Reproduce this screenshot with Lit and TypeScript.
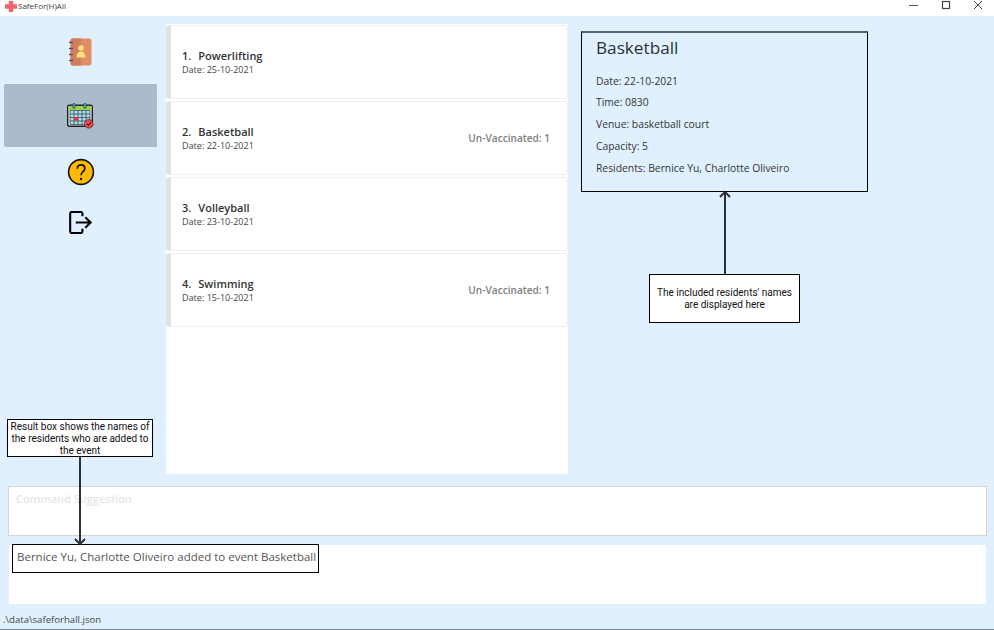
import { LitElement, css, html, svg } from 'lit';
import { customElement } from 'lit/decorators.js';

const events = [
  { name: 'Powerlifting', date: '25-10-2021', unvaccinated: 0 },
  { name: 'Basketball', date: '22-10-2021', unvaccinated: 1 },
  { name: 'Volleyball', date: '23-10-2021', unvaccinated: 0 },
  { name: 'Swimming', date: '15-10-2021', unvaccinated: 1 },
];

const contactsIcon = html`<svg width="24" height="28" viewBox="0 0 24 28">
  <rect x="1.500" y="0.500" width="21" height="27" rx="2" fill="#e08e64" />
  <path d="M1.500 2.500a2 2 0 0 1 2-2H12v27H3.500a2 2 0 0 1-2-2z" fill="#cf7f5e" />
  <circle cx="12" cy="10" r="2.800" fill="#fbe07e" />
  <path d="M7.500 19.500c0-4 1.800-6 4.500-6s4.500 2 4.500 6z" fill="#fbe07e" />
  ${[4.500, 10.500, 16.500, 22.500].map((y) => svg`<path d="M0 ${y}h4" stroke="#5b3f78" stroke-width="1.300" />`)}
</svg>`;

const gridX = [3, 7, 11, 15, 19, 23];
const gridY = [7.500, 11, 14.500, 18, 21.500];

const calendarIcon = html`<svg width="28" height="26" viewBox="0 0 28 26">
  <rect x="0.700" y="2.200" width="24.600" height="21" rx="1.500" fill="#f2f2f2" stroke="#1c1c1c" stroke-width="1.400" />
  <path d="M1.400 2.900h23.200v4.100H1.400z" fill="#9ad14b" />
  <path d="M3 7.500h20v14H3z" fill="#a9dcec" />
  ${gridX.map((x) => svg`<path d="M${x} 7.500v14" stroke="#2c3a44" stroke-width="0.700" />`)}
  ${gridY.map((y) => svg`<path d="M3 ${y}h20" stroke="#2c3a44" stroke-width="0.700" />`)}
  <rect x="7" y="14" width="4" height="3.500" fill="#e8303c" />
  <rect x="5.800" y="0.300" width="2.400" height="5" rx="1" fill="#4fa3c4" stroke="#1c3440" stroke-width="0.600" />
  <rect x="16.800" y="0.300" width="2.400" height="5" rx="1" fill="#4fa3c4" stroke="#1c3440" stroke-width="0.600" />
  <circle cx="21.800" cy="20.800" r="4.300" fill="#ee4b4f" stroke="#3c2226" stroke-width="0.700" />
  <path d="M19.800 20.800l1.600 1.500 2.500-2.600" fill="none" stroke="#401418" stroke-width="1.100" />
</svg>`;

const helpIcon = html`<svg width="28" height="28" viewBox="0 0 28 28">
  <circle cx="14" cy="14" r="12.400" fill="#ffb900" stroke="#111" stroke-width="1.600" />
  <path d="M10.300 10.800c0-2.500 1.700-3.900 3.800-3.900s3.700 1.400 3.700 3.500c0 3.100-3.800 3.300-3.800 6.900" fill="none" stroke="#111" stroke-width="1.700" />
  <circle cx="14" cy="21" r="1.200" fill="#111" />
</svg>`;

const exitIcon = html`<svg width="24" height="23" viewBox="0 0 25 24">
  <path d="M14 5.500V2.800a1.800 1.800 0 0 0-1.800-1.800H3a1.800 1.800 0 0 0-1.800 1.800v18.400A1.800 1.800 0 0 0 3 23h9.200a1.800 1.800 0 0 0 1.800-1.800v-2.700" fill="none" stroke="#000" stroke-width="2.200" />
  <path d="M7 12h15M17 6.500l5.500 5.500-5.500 5.500" fill="none" stroke="#000" stroke-width="2.200" />
</svg>`;

@customElement('app-root')
export class AppRoot extends LitElement {
  render() {
    return html`
      <div class="window">
        <div class="titlebar">
          <div class="title">
            <svg class="cross" width="12" height="11" viewBox="0 0 12 11">
              <path d="M3.800 0h4.400v3.300H12v4.400H8.200V11H3.800V7.700H0V3.300h3.800z" fill="#f0626a" />
            </svg>
            SafeFor(H)All
          </div>
          <div class="controls">
            <svg width="10" height="10" viewBox="0 0 10 10"><path d="M0 5.500h9" stroke="#555" /></svg>
            <svg width="10" height="10" viewBox="0 0 10 10"><rect x="1.500" y="1.500" width="7" height="7" fill="none" stroke="#444" stroke-width="1.200" /></svg>
            <svg width="10" height="10" viewBox="0 0 10 10"><path d="M1 1l8 8M9 1l-8 8" stroke="#444" /></svg>
          </div>
        </div>

        <div class="main">
          <nav class="sidebar">
            <div class="nav-item">${contactsIcon}</div>
            <div class="nav-item selected">${calendarIcon}</div>
            <div class="nav-item small">${helpIcon}</div>
            <div class="nav-item small">${exitIcon}</div>
          </nav>

          <section class="list">
            ${events.map(
              (e, i) => html`
                <div class="card">
                  <div class="card-text">
                    <div class="card-name"><span class="index">${i + 1}.</span>${e.name}</div>
                    <div class="card-date">Date: ${e.date}</div>
                  </div>
                  ${e.unvaccinated ? html`<div class="tag">Un-Vaccinated: ${e.unvaccinated}</div>` : ''}
                </div>
              `,
            )}
          </section>

          <section class="detail">
            <h1>Basketball</h1>
            <p>Date: 22-10-2021</p>
            <p>Time: 0830</p>
            <p>Venue: basketball court</p>
            <p>Capacity: 5</p>
            <p>Residents: Bernice Yu, Charlotte Oliveiro</p>
          </section>
        </div>

        <div class="command">Command Suggestion</div>
        <div class="result"></div>
        <div class="status">.\\data\\safeforhall.json</div>

        <div class="note note-result">Result box shows the names of the residents who are added to the event</div>
        <div class="note note-detail">The included residents' names are displayed here</div>
        <div class="result-highlight">Bernice Yu, Charlotte Oliveiro added to event Basketball</div>

        <svg class="arrows" width="994" height="630" viewBox="0 0 994 630">
          <path d="M80 457v87M75 539l5 5 5-5" fill="none" stroke="#2f3035" stroke-width="2" />
          <path d="M725 274V192M720 197l5-5 5 5" fill="none" stroke="#2f3035" stroke-width="2" />
        </svg>
      </div>
    `;
  }

  static styles = css`
    :host {
      display: block;
      font-family: 'Open Sans', sans-serif;
    }

    .window {
      position: relative;
      width: 994px;
      height: 630px;
      background: #e1f0ff;
      display: flex;
      flex-direction: column;
      overflow: hidden;
      box-sizing: border-box;
      border-bottom: 1px solid #7d8790;
    }

    .titlebar {
      height: 16px;
      flex: none;
      background: #fff;
      display: flex;
      justify-content: space-between;
      align-items: flex-start;
    }

    .title {
      display: flex;
      align-items: center;
      gap: 1px;
      padding-left: 5px;
      font-size: 8px;
      line-height: 12px;
      color: #3a3a3a;
    }

    .controls {
      display: flex;
      gap: 22px;
      padding-right: 11px;
    }

    .main {
      flex: none;
      height: 458px;
      display: flex;
    }

    .sidebar {
      width: 166px;
      flex: none;
      box-sizing: border-box;
      padding: 17px 9px 0 4px;
      display: flex;
      flex-direction: column;
    }

    .nav-item {
      height: 37px;
      display: flex;
      align-items: center;
      justify-content: center;
    }

    .nav-item.selected {
      height: 63px;
      margin: 14px 0 6px;
      background: #abbbcc;
      border-radius: 2px 0 0 2px;
    }

    .nav-item.small {
      height: 38px;
      margin-bottom: 12px;
    }

    .list {
      width: 402px;
      flex: none;
      margin-top: 8px;
      background: #fff;
      display: flex;
      flex-direction: column;
      gap: 2px;
      padding-top: 1px;
      box-sizing: border-box;
    }

    .card {
      height: 74px;
      flex: none;
      box-sizing: border-box;
      border: 1px solid #f0f0f0;
      border-left: 5px solid #e2e2e2;
      border-radius: 3px;
      padding: 0 17px 0 11px;
      display: flex;
      align-items: center;
      justify-content: space-between;
    }

    .card-name {
      font-size: 11px;
      font-weight: 600;
      line-height: 15px;
      color: #333;
    }

    .index {
      margin-right: 7px;
    }

    .card-date {
      margin-top: 1px;
      font-size: 9.050px;
      line-height: 12px;
      color: #444;
    }

    .tag {
      font-size: 10.100px;
      font-weight: 600;
      color: #808080;
    }

    .detail {
      width: 287px;
      height: 161px;
      margin: 15px 0 0 13px;
      box-sizing: border-box;
      border: 1px solid #000;
      border-top: 2px solid #5c6068;
      padding: 2px 14px 0;
      color: #333;
    }

    h1 {
      margin: 0 0 10.600px;
      font-size: 17.200px;
      font-weight: 400;
      line-height: 25px;
      color: #2b3036;
    }

    p {
      margin: 0;
      font-size: 10.340px;
      line-height: 21.750px;
    }

    .command {
      flex: none;
      height: 50px;
      margin: 12px 7px 0 8px;
      box-sizing: border-box;
      background: #fff;
      border: 1px solid #d6d6d6;
      padding: 4px 7px;
      font-size: 11px;
      font-weight: 600;
      line-height: 15px;
      color: #e6e6e6;
    }

    .result {
      flex: none;
      height: 59px;
      margin: 9px 8px 0 9px;
      background: #fff;
    }

    .status {
      flex: 1;
      padding-left: 3px;
      font-size: 9.600px;
      line-height: 31px;
      color: #444;
    }

    .note {
      position: absolute;
      box-sizing: border-box;
      background: #fff;
      border: 1px solid #000;
      font-family: Roboto, sans-serif;
      font-size: 10px;
      line-height: 12px;
      text-align: center;
      color: #111;
    }

    .note-result {
      left: 7px;
      top: 419px;
      width: 146px;
      height: 38px;
      padding: 1px 2px;
    }

    .note-detail {
      left: 649px;
      top: 274px;
      width: 151px;
      height: 49px;
      padding: 12px 6px;
    }

    .result-highlight {
      position: absolute;
      left: 12px;
      top: 544px;
      width: 307px;
      height: 29px;
      box-sizing: border-box;
      border: 1px solid #000;
      padding-left: 4px;
      font-size: 11.500px;
      line-height: 24px;
      white-space: nowrap;
      color: #555;
    }

    .arrows {
      position: absolute;
      left: 0;
      top: 0;
      pointer-events: none;
    }
  `;
}
